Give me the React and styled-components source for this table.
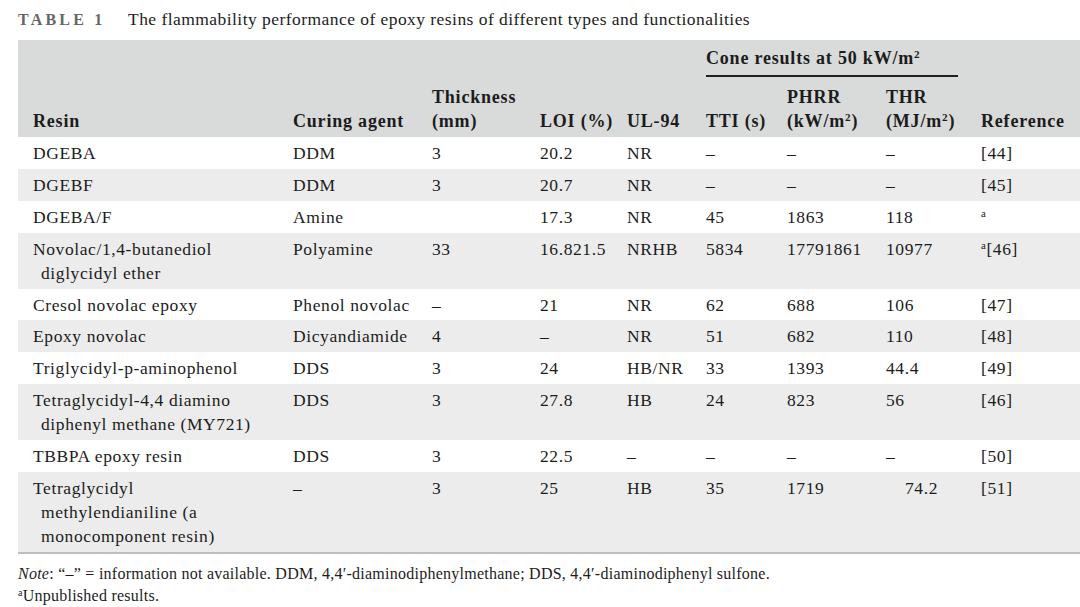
import React from "react";
import styled, { createGlobalStyle } from "styled-components";

const GlobalStyle = createGlobalStyle`
  html, body {
    margin: 0;
    padding: 0;
    background: #fff;
    overflow: hidden;
  }
  body {
    font-family: "Liberation Serif", "Times New Roman", serif;
    color: #1c1c1c;
  }
`;

const Page = styled.div`
  padding: 7px 0 0 18px;
  width: 1100px;
`;

const Caption = styled.div`
  display: flex;
  align-items: baseline;
  height: 24px;
  line-height: 24px;
  font-size: 17.5px;
  letter-spacing: 0.45px;
  margin-bottom: 9px;
`;

const Label = styled.span`
  font-weight: bold;
  font-size: 16px;
  letter-spacing: 3.2px;
  color: #666;
  width: 110px;
`;

const Table = styled.table`
  border-collapse: collapse;
  table-layout: fixed;
  width: 1075px;
  font-size: 17.5px;
  line-height: 24px;
  letter-spacing: 0.6px;
  border-bottom: 2px solid #bdbdbd;
`;

const Head = styled.thead`
  background: #d9dada;
  font-size: 18px;
  letter-spacing: 0.8px;
`;

const Th = styled.th`
  text-align: left;
  font-weight: bold;
  vertical-align: bottom;
  padding: 5px 0 4px ${({ $pad }) => $pad || 0}px;
`;

const GroupTh = styled.th`
  text-align: left;
  font-weight: bold;
  vertical-align: top;
  padding: 6px 0 3px;
`;

const GroupLabel = styled.div`
  margin-right: 23px;
  padding-bottom: 5px;
  border-bottom: 2px solid #222;
`;

const Row = styled.tr`
  background: ${({ $shade }) => ($shade ? "#ececec" : "#fff")};
`;

const Td = styled.td`
  vertical-align: top;
  padding: 4px 0 3.9px ${({ $pad }) => $pad || 0}px;
  white-space: nowrap;
`;

const Hanging = styled.div`
  padding-left: 8px;
  text-indent: -8px;
  white-space: normal;
`;

const Sup = styled.sup`
  font-size: 0.62em;
  line-height: 0;
  vertical-align: 0.55em;
`;

const Notes = styled.div`
  font-size: 16px;
  letter-spacing: 0.25px;
  line-height: 22px;
  padding-top: 9px;
`;

const cols = [275, 139, 108, 87, 79, 81, 99, 95, 112];

const D = "–";

const rows = [
  { resin: ["DGEBA"], cure: "DDM", th: "3", loi: "20.2", ul: "NR", tti: D, phrr: D, thr: D, ref: "[44]" },
  { resin: ["DGEBF"], cure: "DDM", th: "3", loi: "20.7", ul: "NR", tti: D, phrr: D, thr: D, ref: "[45]" },
  { resin: ["DGEBA/F"], cure: "Amine", th: "", loi: "17.3", ul: "NR", tti: "45", phrr: "1863", thr: "118", ref: "", refA: true },
  { resin: ["Novolac/1,4-butanediol", "diglycidyl ether"], cure: "Polyamine", th: "33", loi: "16.821.5", ul: "NRHB", tti: "5834", phrr: "17791861", thr: "10977", ref: "[46]", refA: true },
  { resin: ["Cresol novolac epoxy"], cure: "Phenol novolac", th: D, loi: "21", ul: "NR", tti: "62", phrr: "688", thr: "106", ref: "[47]" },
  { resin: ["Epoxy novolac"], cure: "Dicyandiamide", th: "4", loi: D, ul: "NR", tti: "51", phrr: "682", thr: "110", ref: "[48]" },
  { resin: ["Triglycidyl-p-aminophenol"], cure: "DDS", th: "3", loi: "24", ul: "HB/NR", tti: "33", phrr: "1393", thr: "44.4", ref: "[49]" },
  { resin: ["Tetraglycidyl-4,4 diamino", "diphenyl methane (MY721)"], cure: "DDS", th: "3", loi: "27.8", ul: "HB", tti: "24", phrr: "823", thr: "56", ref: "[46]" },
  { resin: ["TBBPA epoxy resin"], cure: "DDS", th: "3", loi: "22.5", ul: D, tti: D, phrr: D, thr: D, ref: "[50]" },
  { resin: ["Tetraglycidyl", "methylendianiline (a", "monocomponent resin)"], cure: D, th: "3", loi: "25", ul: "HB", tti: "35", phrr: "1719", thr: "74.2", thrPad: 19, ref: "[51]" },
];

const App = () => {
  return (
    <Page>
      <GlobalStyle />
      <Caption>
        <Label>TABLE 1</Label>
        <span>The flammability performance of epoxy resins of different types and functionalities</span>
      </Caption>
      <Table>
        <colgroup>
          {cols.map((w, i) => (
            <col key={i} style={{ width: w }} />
          ))}
        </colgroup>
        <Head>
          <tr>
            <GroupTh colSpan={5} />
            <GroupTh colSpan={3}>
              <GroupLabel>
                Cone results at 50 kW/m<Sup>2</Sup>
              </GroupLabel>
            </GroupTh>
            <GroupTh />
          </tr>
          <tr>
            <Th $pad={15}>Resin</Th>
            <Th>Curing agent</Th>
            <Th>
              Thickness
              <br />
              (mm)
            </Th>
            <Th>LOI (%)</Th>
            <Th>UL-94</Th>
            <Th>TTI (s)</Th>
            <Th>
              PHRR
              <br />
              (kW/m<Sup>2</Sup>)
            </Th>
            <Th>
              THR
              <br />
              (MJ/m<Sup>2</Sup>)
            </Th>
            <Th>Reference</Th>
          </tr>
        </Head>
        <tbody>
          {rows.map((r, i) => (
            <Row key={i} $shade={i % 2 === 1}>
              <Td $pad={15}>
                <Hanging>
                  {r.resin.map((l, j) => (
                    <React.Fragment key={j}>
                      {j > 0 && <br />}
                      {l}
                    </React.Fragment>
                  ))}
                </Hanging>
              </Td>
              <Td>{r.cure}</Td>
              <Td>{r.th}</Td>
              <Td>{r.loi}</Td>
              <Td>{r.ul}</Td>
              <Td>{r.tti}</Td>
              <Td>{r.phrr}</Td>
              <Td $pad={r.thrPad}>{r.thr}</Td>
              <Td>
                {r.refA && <Sup>a</Sup>}
                {r.ref}
              </Td>
            </Row>
          ))}
        </tbody>
      </Table>
      <Notes>
        <div>
          <i>Note</i>: “–” = information not available. DDM, 4,4′-diaminodiphenylmethane; DDS, 4,4′-diaminodiphenyl sulfone.
        </div>
        <div>
          <Sup>a</Sup>Unpublished results.
        </div>
      </Notes>
    </Page>
  );
};

export default App;
